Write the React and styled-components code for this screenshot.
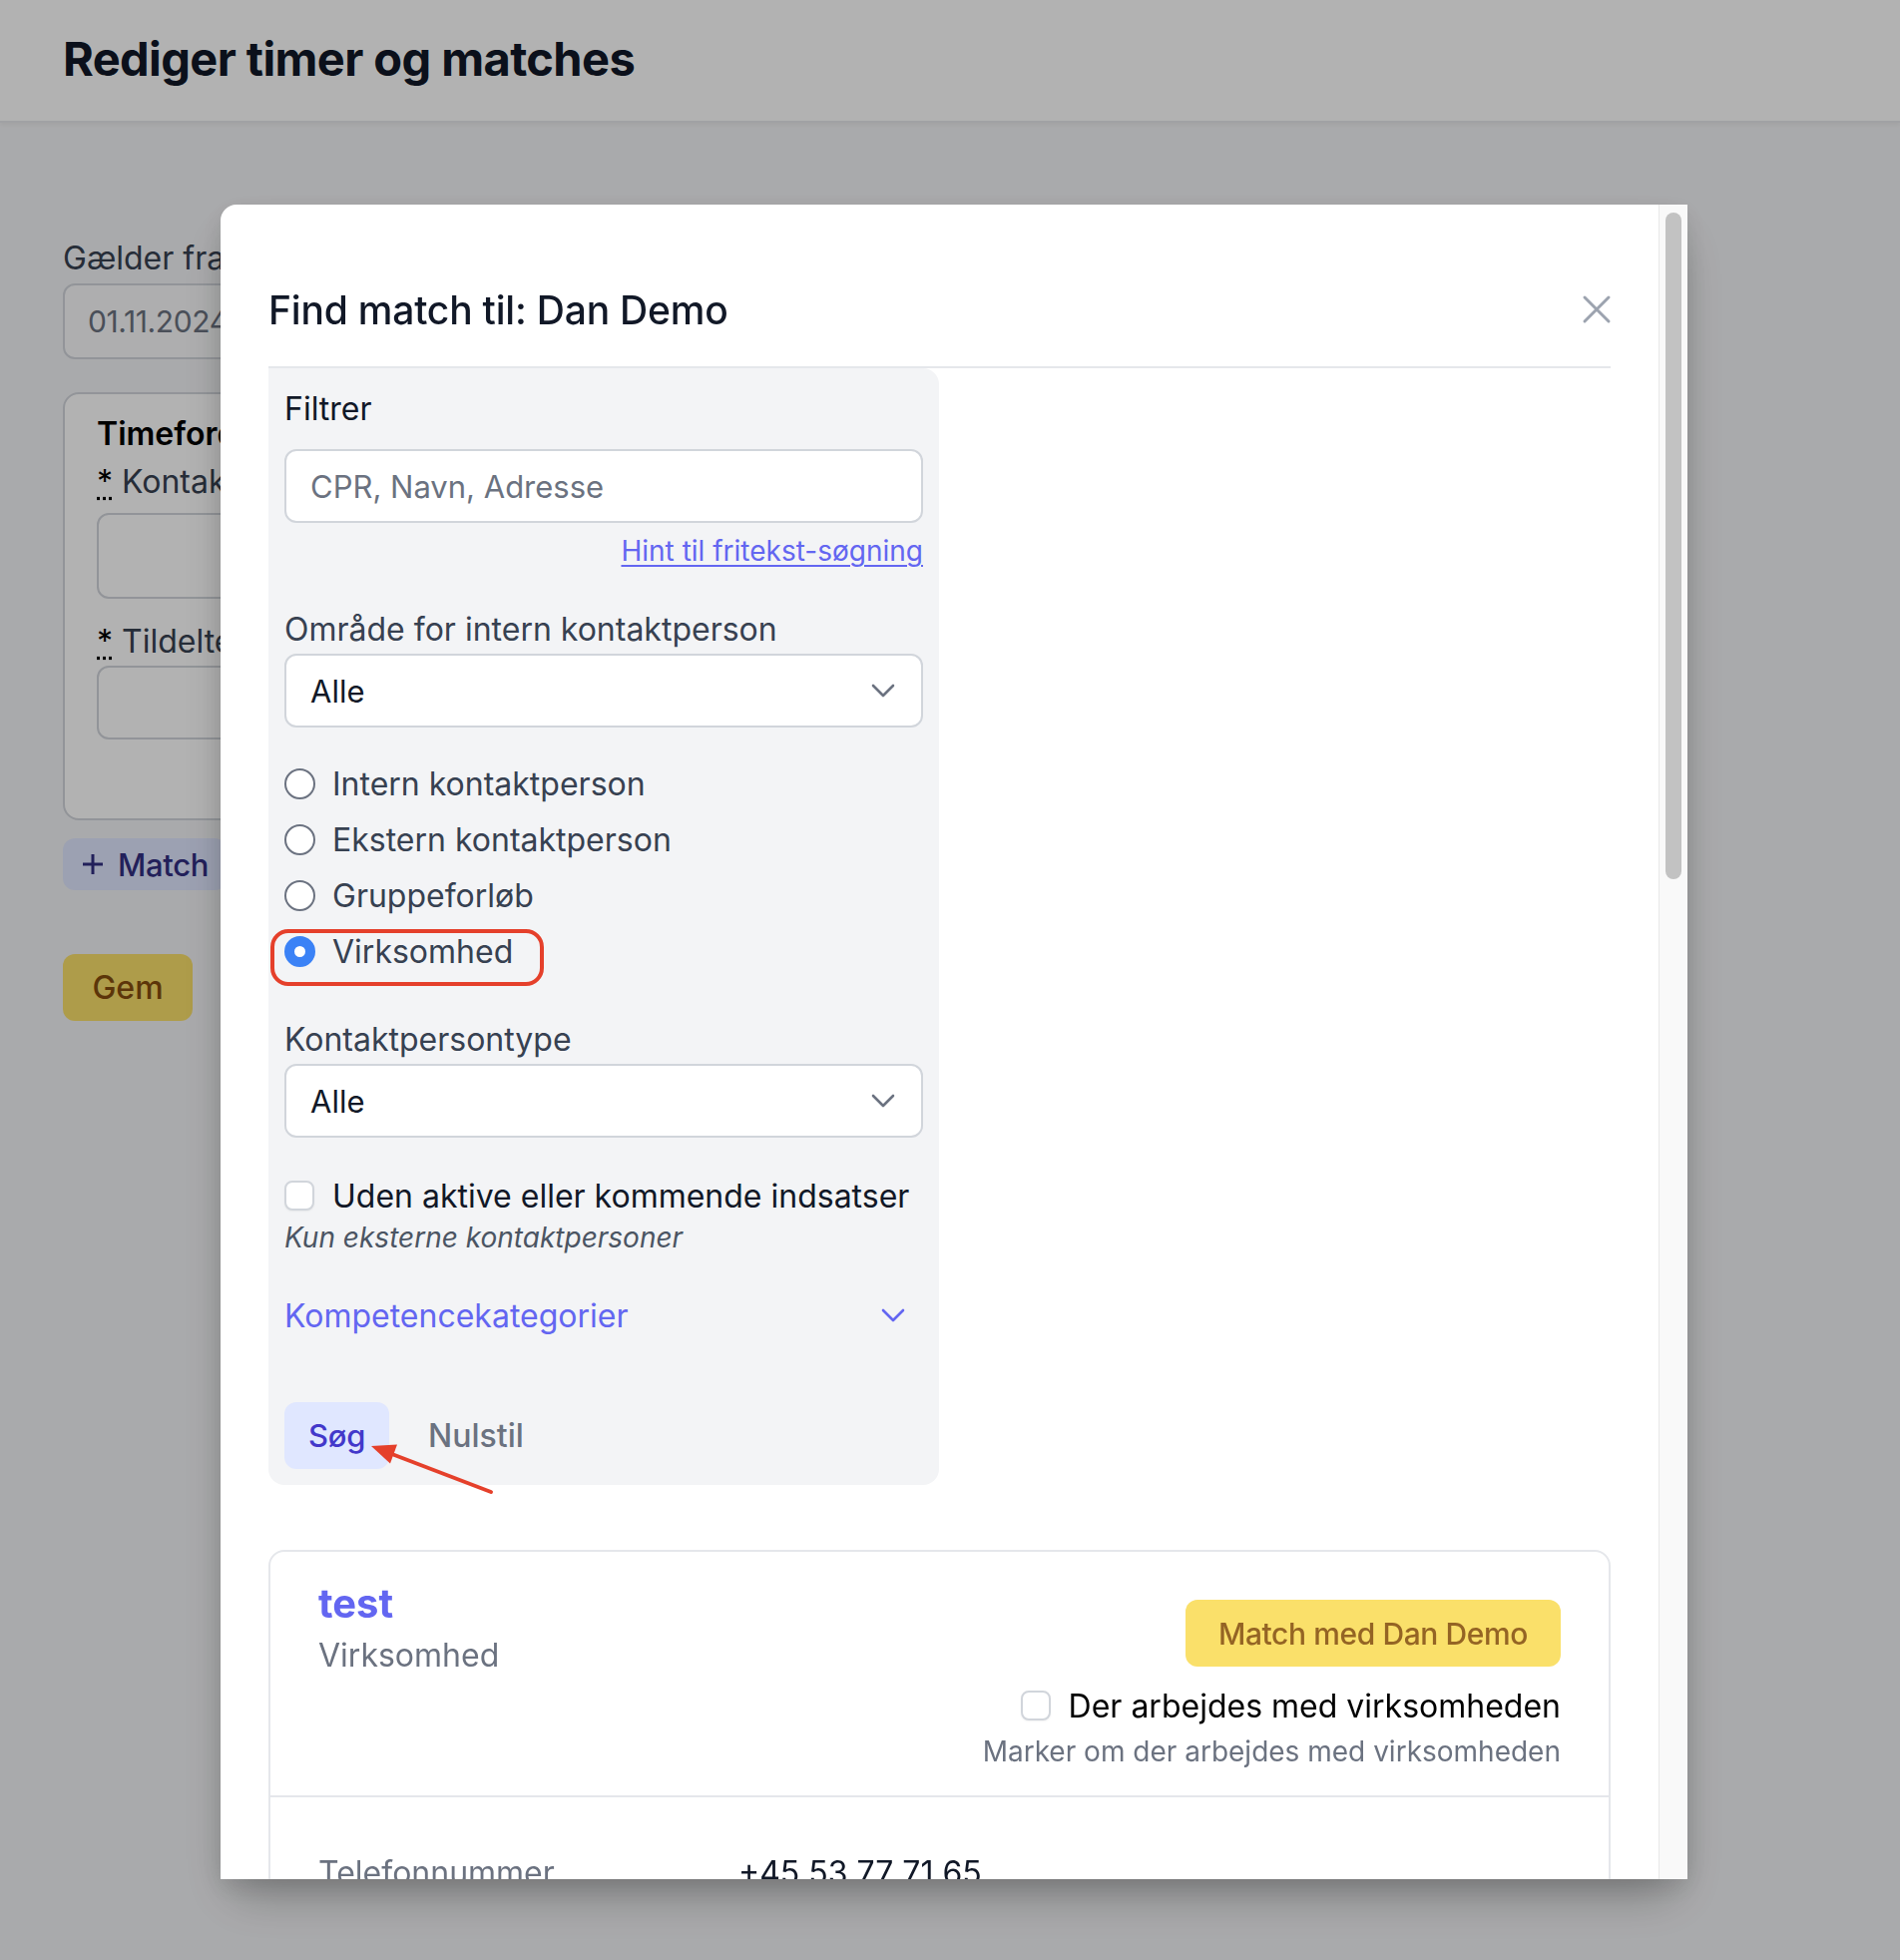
import React from 'react'
import styled, { createGlobalStyle } from 'styled-components'

const GlobalStyle = createGlobalStyle`
  * {
    box-sizing: border-box;
  }

  html,
  body {
    margin: 0;
    padding: 0;
  }

  body {
    background: #f3f4f6;
    color: #111827;
    font-family: Inter, 'Noto Sans', 'Liberation Sans', sans-serif;
    min-height: 1964px;
    overflow: hidden;
  }
`

const ChevronDown = ({ color = '#6b7280' }) => (
  <svg width='24' height='14' viewBox='0 0 24 14' fill='none'>
    <polyline
      points='2,2 12,12 22,2'
      stroke={color}
      strokeWidth='2.6'
      strokeLinecap='round'
      strokeLinejoin='round'
    />
  </svg>
)

const CloseIcon = () => (
  <svg width='48' height='48' viewBox='0 0 24 24' fill='none'>
    <path
      d='M6 18 18 6M6 6l12 12'
      stroke='#9ca3af'
      strokeWidth='1.5'
      strokeLinecap='round'
      strokeLinejoin='round'
    />
  </svg>
)

const PlusIcon = () => (
  <svg width='24' height='24' viewBox='0 0 24 24' fill='none'>
    <path d='M12 2v20M2 12h20' stroke='currentColor' strokeWidth='3' />
  </svg>
)

const Arrow = () => (
  <ArrowSvg width='150' height='70' viewBox='0 0 150 70'>
    <line
      x1='133'
      y1='56'
      x2='35'
      y2='18.5'
      stroke='#e5402b'
      strokeWidth='4'
      strokeLinecap='round'
    />
    <polygon points='13,10 39,8.6 32,27.6' fill='#e5402b' />
  </ArrowSvg>
)

const radios = [
  { label: 'Intern kontaktperson', checked: false },
  { label: 'Ekstern kontaktperson', checked: false },
  { label: 'Gruppeforløb', checked: false },
  { label: 'Virksomhed', checked: true }
]

const App = () => (
  <>
    <GlobalStyle />
    <TopBar>
      <PageTitle>Rediger timer og matches</PageTitle>
    </TopBar>
    <Main>
      <FieldLabel>Gælder fra og med</FieldLabel>
      <DateField>01.11.2024</DateField>
      <Card>
        <CardTitle>Timefordeling</CardTitle>
        <FieldLabel>
          <Req title='påkrævet'>*</Req> Kontaktperson
        </FieldLabel>
        <PageInput tall />
        <FieldLabel spaced>
          <Req title='påkrævet'>*</Req> Tildelte timer
        </FieldLabel>
        <PageInput />
      </Card>
      <AddButton>
        <PlusIcon />
        Match
      </AddButton>
      <SaveButton>Gem</SaveButton>
    </Main>

    <Backdrop />

    <Modal>
      <ModalBody>
        <ModalHeader>
          <ModalTitle>Find match til: Dan Demo</ModalTitle>
          <CloseButton aria-label='Luk'>
            <CloseIcon />
          </CloseButton>
        </ModalHeader>

        <FilterPanel>
          <PanelHeading>Filtrer</PanelHeading>
          <SearchInput placeholder='CPR, Navn, Adresse' />
          <HintRow>
            <HintLink href='#hint'>Hint til fritekst-søgning</HintLink>
          </HintRow>

          <FilterLabel top={35}>Område for intern kontaktperson</FilterLabel>
          <SelectBox>
            <span>Alle</span>
            <ChevronDown />
          </SelectBox>

          <RadioGroup>
            {radios.map(r => (
              <RadioRow key={r.label}>
                <RadioDot checked={r.checked} />
                {r.label}
                {r.checked && <Highlight />}
              </RadioRow>
            ))}
          </RadioGroup>

          <FilterLabel top={41}>Kontaktpersontype</FilterLabel>
          <SelectBox>
            <span>Alle</span>
            <ChevronDown />
          </SelectBox>

          <CheckRow>
            <CheckBox />
            Uden aktive eller kommende indsatser
          </CheckRow>
          <HelpText>Kun eksterne kontaktpersoner</HelpText>

          <AccordionToggle>
            Kompetencekategorier
            <ChevronDown color='#6366f1' />
          </AccordionToggle>

          <ButtonRow>
            <SearchButton>Søg</SearchButton>
            <ResetButton>Nulstil</ResetButton>
          </ButtonRow>
          <Arrow />
        </FilterPanel>

        <ResultCard>
          <ResultHeader>
            <div>
              <ResultName>test</ResultName>
              <ResultType>Virksomhed</ResultType>
            </div>
            <ResultActions>
              <MatchButton>Match med Dan Demo</MatchButton>
              <WorkRow>
                <CheckBox />
                Der arbejdes med virksomheden
              </WorkRow>
              <WorkHint>Marker om der arbejdes med virksomheden</WorkHint>
            </ResultActions>
          </ResultHeader>
          <DetailList>
            <dt>Telefonnummer</dt>
            <dd>+45 53 77 71 65</dd>
            <dt>E-mail</dt>
            <dd>test@example.dk</dd>
            <dt>Adresse</dt>
            <dd>Testvej 1, 8000 Aarhus C</dd>
          </DetailList>
        </ResultCard>
      </ModalBody>
      <ScrollTrack>
        <ScrollThumb />
      </ScrollTrack>
    </Modal>
  </>
)

export default App

/* underlying page */

const TopBar = styled.header`
  align-items: center;
  background: #fff;
  border-bottom: 2px solid #e5e7eb;
  box-shadow: 0 2px 4px rgba(0, 0, 0, 0.05);
  display: flex;
  height: 123px;
  padding: 0 63px;
`

const PageTitle = styled.h1`
  color: #111827;
  font-size: 47px;
  font-weight: 700;
  letter-spacing: -0.6px;
  line-height: 1;
  margin: 0;
  padding-bottom: 4px;
`

const Main = styled.main`
  display: flex;
  flex-direction: column;
  align-items: flex-start;
  padding: 112px 63px;
`

const FieldLabel = styled.label`
  color: #374151;
  display: block;
  font-size: 32px;
  line-height: 48px;
  margin-top: ${p => (p.spaced ? '19px' : '0')};
  white-space: nowrap;
`

const Req = styled.abbr`
  color: #000;
  text-decoration: underline dotted;
  text-underline-offset: 4px;
`

const DateField = styled.div`
  align-items: center;
  background: #f9fafb;
  border: 2px solid #d1d5db;
  border-radius: 12px;
  color: #6b7280;
  display: flex;
  font-size: 30px;
  height: 76px;
  letter-spacing: -0.4px;
  margin-top: 1px;
  padding: 0 23px;
  width: 420px;
`

const Card = styled.section`
  background: #fff;
  border: 2px solid #d1d5db;
  border-radius: 16px;
  margin-top: 33px;
  padding: 16px 32px 79px;
  width: 900px;
`

const CardTitle = styled.h2`
  color: #000;
  font-size: 32px;
  font-weight: 600;
  line-height: 48px;
  margin: 0;
`

const PageInput = styled.div`
  background: #fff;
  border: 2px solid #d1d5db;
  border-radius: 12px;
  height: ${p => (p.tall ? '86px' : '74px')};
  margin-top: ${p => (p.tall ? '7px' : '0')};
`

const AddButton = styled.button`
  align-items: center;
  background: #e0e7ff;
  border: 0;
  border-radius: 12px;
  color: #312e81;
  display: inline-flex;
  font-family: inherit;
  font-size: 31px;
  font-weight: 500;
  gap: 13px;
  height: 52px;
  letter-spacing: -0.3px;
  margin-top: 18px;
  padding: 0 18px;
`

const SaveButton = styled.button`
  background: #fae06a;
  border: 0;
  border-radius: 12px;
  color: #854d0e;
  font-family: inherit;
  font-size: 32px;
  font-weight: 500;
  height: 67px;
  margin-top: 64px;
  width: 130px;
`

const Backdrop = styled.div`
  background: rgba(0, 0, 0, 0.3);
  inset: 0;
  position: fixed;
`

/* modal */

const Modal = styled.div`
  background: #fff;
  border-radius: 16px 0 0 0;
  box-shadow: 0 25px 50px -12px rgba(0, 0, 0, 0.3), 0 8px 24px rgba(0, 0, 0, 0.1);
  display: flex;
  height: 1678px;
  left: 221px;
  overflow: hidden;
  position: fixed;
  top: 205px;
  width: 1470px;
`

const ModalBody = styled.div`
  flex: 1;
  overflow: hidden;
  padding: 48px 48px 0;
`

const ModalHeader = styled.div`
  align-items: center;
  border-bottom: 2px solid #e5e7eb;
  display: flex;
  height: 116px;
  justify-content: space-between;
`

const ModalTitle = styled.h2`
  color: #111827;
  font-size: 39px;
  font-weight: 500;
  letter-spacing: -0.2px;
  margin: 0;
`

const CloseButton = styled.button`
  background: none;
  border: 0;
  display: flex;
  margin-right: -10px;
  padding: 0;
`

const FilterPanel = styled.div`
  background: #f3f4f6;
  border-radius: 0 16px 16px 16px;
  display: flex;
  flex-direction: column;
  padding: 17px 16px 16px;
  position: relative;
  width: 672px;
`

const PanelHeading = styled.div`
  color: #111827;
  font-size: 32px;
  line-height: 48px;
`

const SearchInput = styled.input`
  background: #fff;
  border: 2px solid #d1d5db;
  border-radius: 12px;
  color: #111827;
  font-family: inherit;
  font-size: 31px;
  height: 74px;
  margin-top: 16px;
  outline: none;
  padding: 0 24px;
  width: 100%;

  &::placeholder {
    color: #6b7280;
  }
`

const HintRow = styled.div`
  font-size: 28px;
  line-height: 40px;
  margin-top: 8px;
  text-align: right;
`

const HintLink = styled.a`
  color: #6366f1;
  text-decoration: underline;
  text-underline-offset: 4px;
  text-decoration-thickness: 2px;
`

const FilterLabel = styled.div`
  color: #374151;
  font-size: 32px;
  line-height: 48px;
  margin-top: ${p => p.top}px;
`

const SelectBox = styled.div`
  align-items: center;
  background: #fff;
  border: 2px solid #d1d5db;
  border-radius: 12px;
  color: #111827;
  display: flex;
  font-size: 31px;
  height: 74px;
  justify-content: space-between;
  padding: 0 26px 0 24px;
`

const RadioGroup = styled.div`
  display: flex;
  flex-direction: column;
  gap: 8px;
  margin-top: 32px;
`

const RadioRow = styled.label`
  align-items: center;
  color: #374151;
  display: flex;
  font-size: 32px;
  gap: 17px;
  height: 48px;
  position: relative;
`

const RadioDot = styled.span`
  background: #fff;
  border: ${p => (p.checked ? '10px solid #3b82f6' : '2px solid #6b7280')};
  border-radius: 50%;
  flex: none;
  height: 31px;
  width: 31px;
`

const Highlight = styled.span`
  border: 4px solid #e5402b;
  border-radius: 18px;
  height: 57px;
  left: -14px;
  pointer-events: none;
  position: absolute;
  top: 2px;
  width: 274px;
`

const CheckRow = styled.label`
  align-items: center;
  color: #111827;
  display: flex;
  font-size: 32px;
  gap: 18px;
  height: 48px;
  margin-top: 34px;
  white-space: nowrap;
`

const CheckBox = styled.span`
  background: #fff;
  border: 2px solid #d1d5db;
  border-radius: 8px;
  box-shadow: 0 1px 2px rgba(0, 0, 0, 0.05);
  flex: none;
  height: 30px;
  width: 30px;
`

const HelpText = styled.div`
  color: #4b5563;
  font-size: 28px;
  font-style: italic;
  line-height: 40px;
  margin-top: -2px;
`

const AccordionToggle = styled.div`
  align-items: center;
  color: #6366f1;
  display: flex;
  font-size: 32px;
  height: 48px;
  justify-content: space-between;
  margin-top: 34px;
  padding-right: 18px;
`

const ButtonRow = styled.div`
  display: flex;
  gap: 15px;
  margin-top: 63px;
`

const SearchButton = styled.button`
  background: #e0e7ff;
  border: 0;
  border-radius: 12px;
  color: #4338ca;
  font-family: inherit;
  font-size: 31px;
  font-weight: 500;
  height: 67px;
  letter-spacing: -0.3px;
  padding: 0 24px;
`

const ResetButton = styled.button`
  background: none;
  border: 0;
  color: #6b7280;
  font-family: inherit;
  font-size: 32px;
  font-weight: 500;
  height: 67px;
  padding: 0 24px;
`

const ArrowSvg = styled.svg`
  left: 90px;
  pointer-events: none;
  position: absolute;
  top: 1070px;
`

const ResultCard = styled.div`
  border: 2px solid #e5e7eb;
  border-radius: 16px;
  margin-top: 65px;
`

const ResultHeader = styled.div`
  display: flex;
  justify-content: space-between;
  padding: 24px 48px;
`

const ResultName = styled.div`
  color: #6366f1;
  font-size: 40px;
  font-weight: 700;
  line-height: 56px;
`

const ResultType = styled.div`
  color: #6b7280;
  font-size: 32px;
  line-height: 48px;
`

const ResultActions = styled.div`
  align-items: flex-end;
  display: flex;
  flex-direction: column;
`

const MatchButton = styled.button`
  background: #fae06a;
  border: 0;
  border-radius: 12px;
  color: #946424;
  font-family: inherit;
  font-size: 30px;
  font-weight: 500;
  height: 67px;
  letter-spacing: -0.4px;
  margin-top: 24px;
  padding: 0 33px;
`

const WorkRow = styled.label`
  align-items: center;
  color: #000;
  display: flex;
  font-size: 32px;
  gap: 18px;
  height: 48px;
  margin-top: 15px;
`

const WorkHint = styled.div`
  color: #6b7280;
  font-size: 28px;
  line-height: 40px;
  margin-top: 2px;
`

const DetailList = styled.dl`
  border-top: 2px solid #e5e7eb;
  display: grid;
  font-size: 32px;
  grid-template-columns: 421px 1fr;
  line-height: 48px;
  margin: 0;
  padding: 52px 48px 48px;
  row-gap: 24px;

  dt {
    color: #6b7280;
  }

  dd {
    color: #111827;
    margin: 0;
  }
`

const ScrollTrack = styled.div`
  background: #f9f9f9;
  border-left: 1px solid #e8e8e8;
  flex: none;
  padding: 8px 6px 0 6px;
  width: 29px;
`

const ScrollThumb = styled.div`
  background: #c2c2c2;
  border-radius: 8px;
  height: 668px;
  width: 16px;
`
